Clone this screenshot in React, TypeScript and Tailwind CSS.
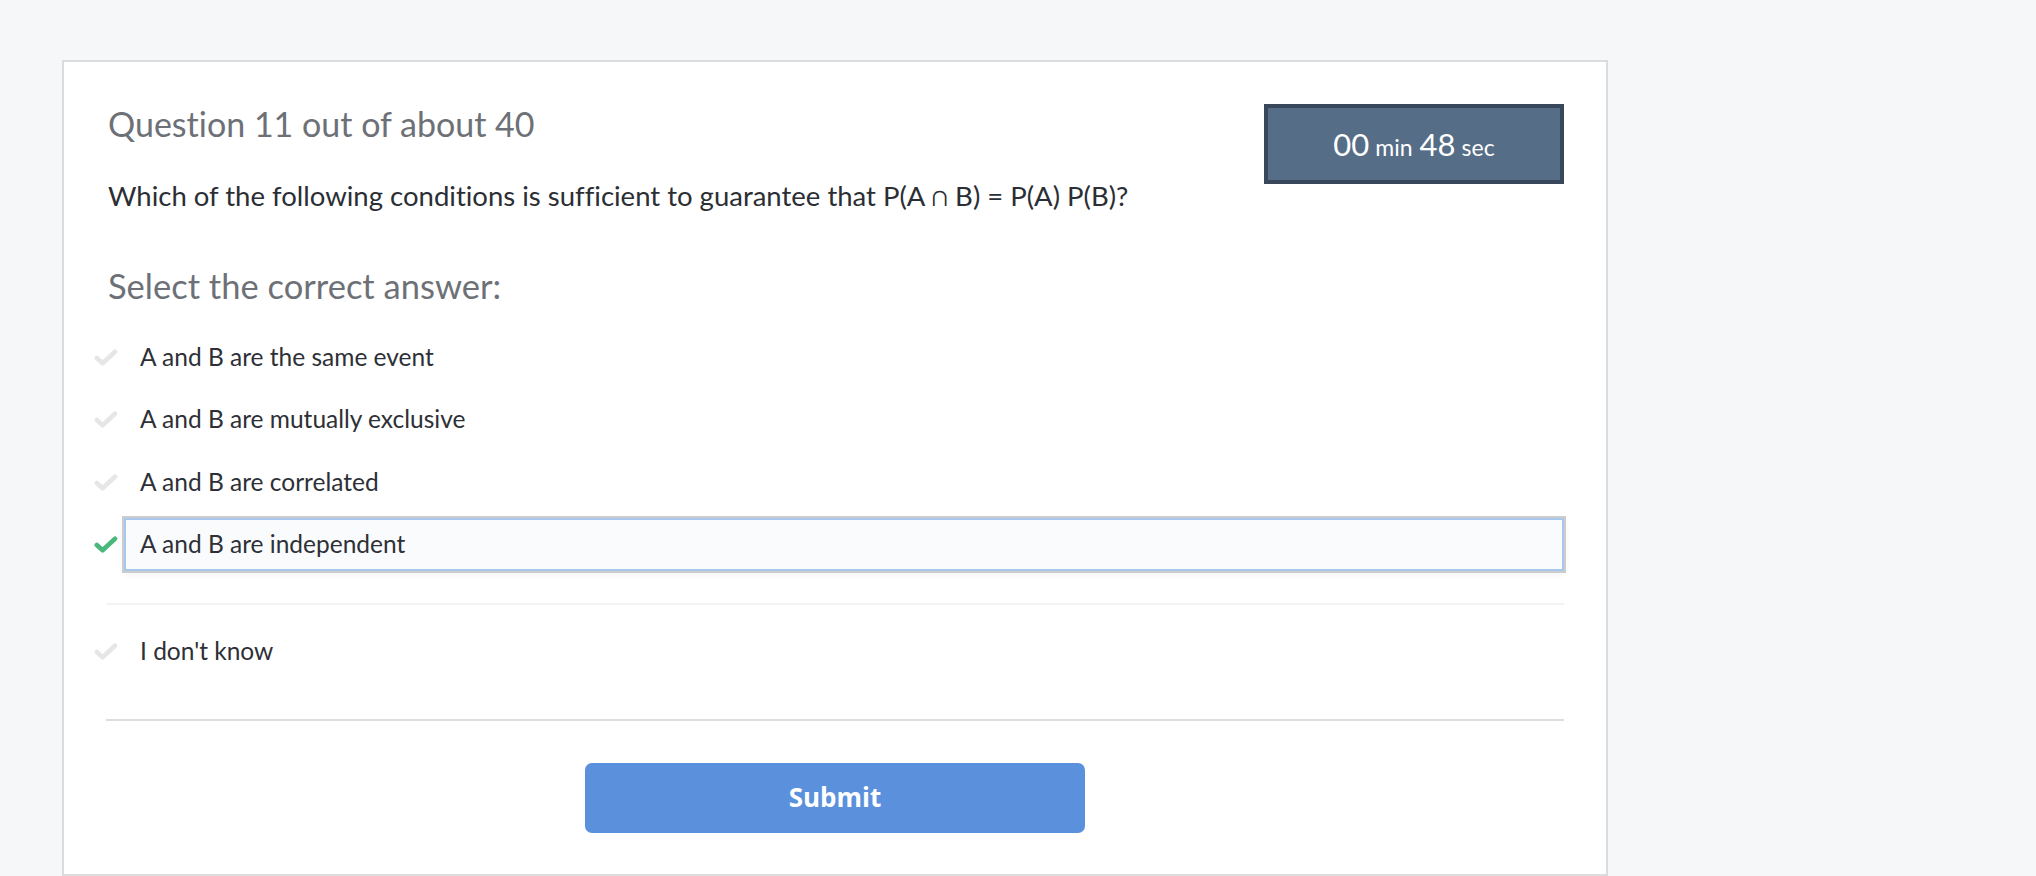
import React from "react";

const Check = ({ color }: { color: string }) => (
  <svg width="24" height="17" viewBox="0 0 24 17" fill="none">
    <path d="M2.8 9 L8.6 14.3 L21 2.8" stroke={color} strokeWidth="4.6" strokeLinecap="round" strokeLinejoin="round" />
  </svg>
);

const options = [
  "A and B are the same event",
  "A and B are mutually exclusive",
  "A and B are correlated",
  "A and B are independent",
];

export default function App() {
  return (
    <div
      className="min-h-[876px] w-full bg-[#f6f7f9] pt-[60px] pl-[62px] [font-variant-ligatures:no-common-ligatures]"
      style={{ fontFamily: "Lato, 'Open Sans', sans-serif" }}
    >
      <div className="w-[1546px] h-[816px] border-2 border-[#dcdcdc] bg-white pt-[42px] pl-[42px] pr-[42px]">
        <div className="flex items-start justify-between">
          <div className="pl-[2px]">
            <h1 className="text-[34px] leading-[40px] text-[#6d7177] font-normal">Question 11 out of about 40</h1>
            <p className="mt-[35px] text-[27.5px] leading-[34px] text-[#2b2e34]">
              Which of the following conditions is sufficient to guarantee that P(A ∩ B) = P(A) P(B)?
            </p>
            <h2 className="mt-[53px] text-[34.5px] leading-[40px] text-[#6d7177] font-normal">Select the correct answer:</h2>
          </div>
          <div className="w-[300px] h-[80px] border-4 border-[#384759] bg-[#566d87] flex items-baseline justify-center pt-[18px] text-white">
            <span className="text-[31px] leading-[36px]">00</span>
            <span className="text-[23px] leading-[36px] ml-[6px]">min</span>
            <span className="text-[31px] leading-[36px] ml-[7px]">48</span>
            <span className="text-[23px] leading-[36px] ml-[6px]">sec</span>
          </div>
        </div>

        <div className="mt-[20px]">
          {options.map((o, i) => {
            const sel = i === 3;
            return (
              <div key={o} className="h-[62.5px] flex items-center ml-[-12px]">
                <div className="w-[24px] flex justify-center">
                  <Check color={sel ? "#4bb87b" : "#e6e6e6"} />
                </div>
                <div
                  className={
                    "ml-[6px] flex-1 h-[53px] flex items-center pl-[14px] border-2 text-[24.5px] text-[#2d3036] " +
                    (sel
                      ? "border-[#a8c7ec] bg-[#f9fbfd] shadow-[0_0_0_2px_#cccccc,0_3px_8px_rgba(0,0,0,0.06)]"
                      : "border-transparent")
                  }
                >
                  {o}
                </div>
              </div>
            );
          })}
          <div className="mt-[27px] h-[2px] bg-[#f3f3f3]" />
          <div className="mt-[15px] h-[62.5px] flex items-center ml-[-12px]">
            <div className="w-[24px] flex justify-center">
              <Check color="#e6e6e6" />
            </div>
            <div className="ml-[6px] pl-[16px] text-[24.5px] text-[#2d3036]">I don't know</div>
          </div>
          <div className="mt-[36px] h-[2px] bg-[#dddddd]" />
          <div className="mt-[42px] flex justify-center">
            <button
              className="w-[500px] h-[70px] rounded-[7px] bg-[#5b91dc] text-white text-[26px] font-bold"
              style={{ fontFamily: "'Open Sans', Lato, sans-serif" }}
            >
              Submit
            </button>
          </div>
        </div>
      </div>
    </div>
  );
}
